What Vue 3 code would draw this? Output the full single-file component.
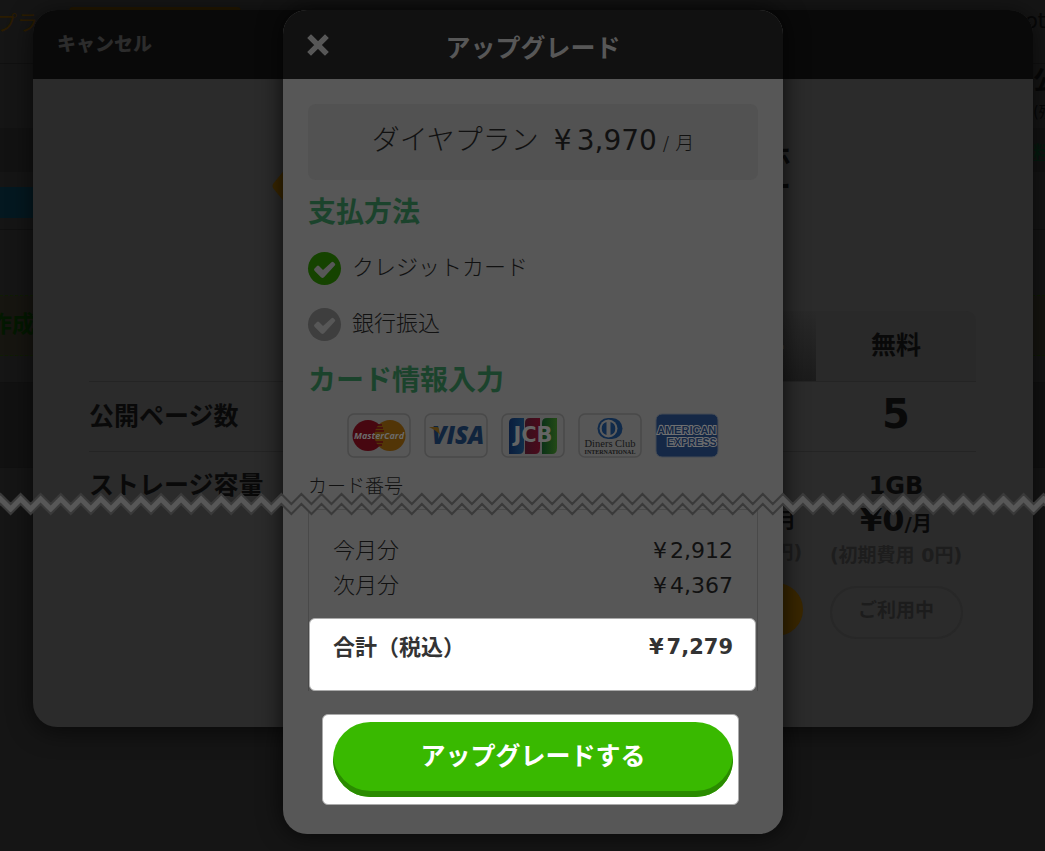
<script setup>
import { ref } from 'vue'

const method = ref('card')
const methods = [
  { id: 'card', label: 'クレジットカード' },
  { id: 'bank', label: '銀行振込' },
]
const invoice = [
  { label: '今月分', price: '2,912' },
  { label: '次月分', price: '4,367' },
]

const zigzag = (high, low) =>
  Array.from({ length: 240 }, (_, i) => `${(i * 10.03 - 9.5).toFixed(1)},${i % 2 ? high : low}`)
const upper = zigzag(2, 12)
const lower = zigzag(12, 22)
const band = [...upper, ...[...lower].reverse()].join(' ')
</script>

<template>
  <div class="page">
    <div class="backdrop" aria-hidden="true">
      <div class="strip top"><span class="plan-word">プラン</span><span class="bar"></span><span class="right thin">ot</span></div>
      <div class="strip publish"><span class="right big">公</span></div>
      <div class="strip rest"><span class="right small">(残</span><span class="right green">料</span></div>
      <div class="strip blue-row"><span class="blue"></span></div>
      <div class="strip gap-row"></div>
      <div class="strip create">作成</div>
      <div class="strip after"></div>
      <div class="strip dark"></div>
      <div class="strip last"></div>
    </div>

    <section class="plans">
      <header class="plans-head"><button class="cancel" type="button">キャンセル</button></header>
      <div class="hero">
        <svg class="gem" width="32" height="40" viewBox="0 0 32 40"><path d="M14 2q2-2 4 0l13 16q1 2 0 4L18 38q-2 2-4 0L1 22q-1-2 0-4z" fill="#3a2700" /></svg>
        <p class="hero-text">ホ<br>ー</p>
      </div>
      <table class="compare">
        <colgroup><col><col class="plan-col"><col class="plan-col"></colgroup>
        <thead>
          <tr><td></td><th class="silver" scope="col">シルバー</th><th class="free" scope="col">無料</th></tr>
        </thead>
        <tbody>
          <tr><th scope="row">公開ページ数</th><td></td><td class="count">5</td></tr>
          <tr class="storage"><th scope="row">ストレージ容量</th><td></td><td class="size">1GB</td></tr>
        </tbody>
        <tfoot>
          <tr>
            <td></td>
            <td><p class="price"><small>/月</small></p><p class="fee">(初期費用 0円)</p><button class="choose" type="button" aria-label="選択"></button></td>
            <td><p class="price">¥0<small>/月</small></p><p class="fee">(初期費用 0円)</p><button class="current" type="button">ご利用中</button></td>
          </tr>
        </tfoot>
      </table>
    </section>

    <section class="dialog" role="dialog" aria-labelledby="dialog-title">
      <header class="dialog-head">
        <button class="close" type="button" aria-label="閉じる">
          <svg width="22" height="22" viewBox="0 0 22 22"><path d="M4 4 18 18M18 4 4 18" stroke="#575757" stroke-width="5.400" stroke-linecap="square" stroke-linejoin="round" /></svg>
        </button>
        <h1 id="dialog-title">アップグレード</h1>
      </header>
      <div class="dialog-body">
        <p class="plan"><span>ダイヤプラン</span><span class="amount"><i>¥</i>3,970</span><small>/ 月</small></p>

        <h2>支払方法</h2>
        <div class="methods">
          <label v-for="m in methods" :key="m.id" class="method">
            <span class="tick" :class="{ on: method === m.id }">
              <input v-model="method" type="radio" name="method" :value="m.id">
              <svg width="33" height="33" viewBox="0 0 33 33"><path d="M6.500 16.500 9 14q1-1 2 0l4 4 8.500-7.700q1-1 2 0l1.300 1.300q1 1 0 2L16 25.200q-1.500 1.500-3 0l-6.500-6.500q-1-1.100 0-2.200z" fill="#575757" /></svg>
            </span>
            {{ m.label }}
          </label>
        </div>

        <h2 class="card-heading">カード情報入力</h2>
        <div class="cards">
          <svg viewBox="0 0 64 45" role="img" aria-label="MasterCard">
            <rect x="1" y="1" width="62" height="43" rx="6" fill="#575757" stroke="#494949" stroke-width="1.500" />
            <circle cx="21" cy="22.500" r="15.500" fill="#470710" /><circle cx="43" cy="22.500" r="15.500" fill="#523507" />
            <path d="M29 12h6M28 15h8M27 18h10M27 29h9M28 32h7" stroke="#470710" stroke-width="1.300" />
            <text x="32" y="26" text-anchor="middle" font-family="Open Sans" font-size="9" font-weight="700" font-style="italic" fill="#6b6b6b">MasterCard</text>
          </svg>
          <svg viewBox="0 0 64 45" role="img" aria-label="VISA">
            <rect x="1" y="1" width="62" height="43" rx="6" fill="#575757" stroke="#494949" stroke-width="1.500" />
            <text x="34" y="31" text-anchor="middle" font-family="Open Sans" font-size="24" font-weight="800" font-style="italic" fill="#10243d">VISA</text>
            <path d="M5 14h8q2 0 2 3l1 5Q12 17 5 14z" fill="#4f390f" />
          </svg>
          <svg viewBox="0 0 64 45" role="img" aria-label="JCB">
            <rect x="1" y="1" width="62" height="43" rx="6" fill="#575757" stroke="#494949" stroke-width="1.500" />
            <defs>
              <linearGradient id="jb"><stop offset="0" stop-color="#0a1d3d" /><stop offset="1" stop-color="#102f4b" /></linearGradient>
              <linearGradient id="jr"><stop offset="0" stop-color="#35101d" /><stop offset="1" stop-color="#4b0a1b" /></linearGradient>
              <linearGradient id="jg"><stop offset="0" stop-color="#0b3217" /><stop offset="1" stop-color="#234a16" /></linearGradient>
            </defs>
            <path d="M8 10q0-5 5-5h10v30q0 6-5 6H8z" fill="url(#jb)" /><path d="M24 10q0-5 5-5h10v30q0 6-5 6H24z" fill="url(#jr)" /><path d="M41 10q0-5 5-5h10v30q0 6-5 6H41z" fill="url(#jg)" />
            <text x="32" y="29" text-anchor="middle" font-family="DejaVu Sans" font-size="21" font-weight="700" fill="#646464">JCB</text>
          </svg>
          <svg viewBox="0 0 64 45" role="img" aria-label="Diners Club International">
            <rect x="1" y="1" width="62" height="43" rx="6" fill="#575757" stroke="#494949" stroke-width="1.500" />
            <path d="M30 5h4a10.500 10.500 0 0 1 0 21h-4a10.500 10.500 0 0 1 0-21z" fill="#102a4a" />
            <circle cx="30.500" cy="15.500" r="9" fill="#5c5c5c" />
            <path d="M28.500 9v13a6.800 6.800 0 0 1 0-13zM32.500 9v13a6.800 6.800 0 0 0 0-13z" fill="#102a4a" />
            <text x="32" y="34" text-anchor="middle" font-family="Liberation Serif" font-size="10.500" fill="#151515">Diners Club</text>
            <text x="32" y="40.500" text-anchor="middle" font-family="Liberation Serif" font-size="6" font-weight="700" fill="#151515">INTERNATIONAL</text>
          </svg>
          <svg viewBox="0 0 64 45" role="img" aria-label="American Express">
            <rect x="1" y="1" width="62" height="43" rx="6" fill="#152846" stroke="#444b55" />
            <g font-family="Liberation Sans" font-size="11" font-weight="700" fill="#152846" stroke="#707070" stroke-width="2" paint-order="stroke">
              <text x="2" y="21">AMERICAN</text><text x="12" y="33" font-size="10.500">EXPRESS</text>
            </g>
          </svg>
        </div>
        <p class="number">カード番号</p>

        <div class="invoice">
          <dl>
            <div v-for="line in invoice" :key="line.label"><dt>{{ line.label }}</dt><dd><i>¥</i>{{ line.price }}</dd></div>
            <div class="total"><dt>合計（税込）</dt><dd><i>¥</i>7,279</dd></div>
          </dl>
        </div>
        <div class="action"><button class="submit" type="button">アップグレードする</button></div>
      </div>
    </section>

    <svg class="tear" height="26" aria-hidden="true">
      <polygon :points="band" fill="#575757" />
      <polyline :points="upper.join(' ')" /><polyline :points="lower.join(' ')" />
    </svg>
  </div>
</template>

<style>
body { background: #151515; }
</style>

<style scoped>
* { box-sizing: border-box; }
p, h1, h2, dl, dd { margin: 0; }
i { font-style: normal; }
button { font: inherit; border: 0; padding: 0; background: none; cursor: pointer; }
.page {
  position: relative;
  display: grid;
  align-items: start;
  min-height: 100vh;
  padding: 10px 12px 17px 33px;
  overflow: hidden;
  color: #111;
  font-family: "DejaVu Sans", "Noto Sans CJK JP", sans-serif;
}
.backdrop { position: absolute; inset: 0; display: grid; grid-template-rows: 64px 64px 44px 58px 66px 60px 27px 85px 1fr; background: #151515; }
.strip { position: relative; border-bottom: 1px solid #101010; }
.plan-word { position: absolute; left: -4px; top: 10px; color: #2b1c00; font-size: 21px; line-height: 26px; }
.bar { position: absolute; left: 69px; top: 7px; width: 172px; height: 20px; border-radius: 4px; background: #221700; }
.right { position: absolute; left: calc(100% - 12px); white-space: nowrap; color: #070707; }
.thin { top: 8px; left: calc(100% - 20px); font-size: 21px; line-height: 26px; }
.big { top: 2px; font-size: 25px; font-weight: 700; line-height: 30px; }
.publish, .rest { border: 0; }
.rest { background: #121212; }
.small { top: -26px; font-size: 15px; line-height: 20px; }
.green { top: 13px; font-size: 18px; font-weight: 700; line-height: 24px; color: #051b0f; text-decoration: underline; }
.blue { position: absolute; left: 0; top: 15px; width: 90px; height: 31px; background: #041820; }
.gap-row { border-bottom: 1px dashed #101d04; }
.create { background: #161510; border-bottom: 1px dashed #101d04; color: #031800; font-size: 23px; font-weight: 700; line-height: 56px; text-indent: -11px; }
.dark { background: #111; }
.last { border: 0; }

.plans, .dialog { grid-area: 1 / 1; overflow: hidden; border-radius: 24px; }
.plans { position: relative; min-height: 717px; background: #2b2b2b; box-shadow: 0 4px 24px #0009; color: #090909; }
.plans-head { height: 69px; background: #090909; }
.cancel { margin: 20px 0 0 24px; color: #2c2c2c; font-size: 19px; font-weight: 900; line-height: 28px; }
.hero { display: flex; justify-content: space-between; height: 232px; padding: 64px 242px 0 239px; }
.gem { margin-top: 23px; }
.hero-text { font-size: 28px; font-weight: 700; line-height: 30px; }
.compare { width: calc(100% - 113px); margin-left: 56px; table-layout: fixed; border-collapse: collapse; font-size: 25px; font-weight: 700; }
.plan-col { width: 160px; }
.compare tr { height: 70px; }
.compare th, .compare td { padding: 0; text-align: center; }
.compare tbody tr { border-top: 1px solid #242424; }
.compare tbody th { padding-bottom: 4px; text-align: left; }
.silver { background: linear-gradient(#292929, #1b1b1b); color: #373737; }
.compare .free { background: #292929; border-radius: 0 10px 0 0; padding-bottom: 6px; }
.compare tbody .count { padding-bottom: 4px; font-size: 40px; line-height: 50px; }
.compare .storage { height: 50px; }
.compare .storage th, .compare .storage td { padding: 18px 0 0; line-height: 32px; }
.compare .storage .size { font-size: 24px; }
.price { height: 32px; font-size: 32px; line-height: 30px; white-space: nowrap; }
.price small { font-size: 20px; }
tfoot td:nth-child(2) .price { text-align: right; padding-right: 20px; }
.fee { margin-top: 5px; color: #1d1d1d; font-size: 19px; line-height: 26px; white-space: nowrap; }
.choose, .current { width: 133px; height: 53px; margin-top: 18px; border-radius: 27px; }
.choose { background: #3a2700; }
.current { border: 2px solid #272727; color: #1c1c1c; font-size: 19px; line-height: 44px; padding-bottom: 4px; }

.dialog { position: relative; justify-self: center; width: 100%; max-width: 500px; background: #575757; box-shadow: 0 0 24px #000b; }
.dialog-head { position: relative; height: 69px; background: #111; color: #575757; text-align: center; }
.close { position: absolute; left: 24px; top: 24px; width: 22px; height: 22px; }
.close svg { display: block; }
h1 { padding-top: 21px; font-size: 25px; line-height: 36px; }
.dialog-body { padding: 25px 25px 29px; }
.plan { display: flex; justify-content: center; align-items: baseline; height: 76px; border-radius: 8px; background: #525252; font-size: 28px; font-weight: 300; line-height: 74px; }
.amount { margin-left: 15px; font-weight: 400; }
.amount i { margin-right: 5px; }
.plan small { margin-left: 6px; font-size: 19px; }
h2 { margin-top: 18px; color: #1b432c; font-size: 28px; line-height: 30px; }
.methods { display: grid; gap: 23px; margin-top: 24px; }
.method { display: flex; gap: 11px; height: 33px; font-size: 22px; font-weight: 300; line-height: 31px; }
.tick { position: relative; width: 33px; height: 33px; border-radius: 50%; background: #3e3e3e; }
.tick.on { background: #154300; }
.tick input { position: absolute; inset: 0; width: 100%; height: 100%; margin: 0; appearance: none; }
.tick svg { display: block; }
.card-heading { margin-top: 25px; }
.cards { display: flex; justify-content: center; gap: 13px; margin: 17px 1px 0 0; }
.cards svg { width: 64px; height: 45px; }
.number { margin-top: 18px; font-size: 19px; font-weight: 300; line-height: 20px; }
.invoice { margin-top: 13px; border: 1px solid #494949; border-bottom: 0; font-size: 22px; font-weight: 300; }
dl { padding-top: 23px; }
dl div { display: flex; justify-content: space-between; padding: 0 24px; line-height: 35px; }
dd { font-weight: 400; }
dd i { margin-right: 3px; }
dl .total { height: 73px; margin: 15px 1px 0 0; padding: 11px 22px 0 23px; border: 1px solid #aaa; border-radius: 6px; background: #fff; color: #333; font-weight: 700; }
.total dd { font-size: 21px; font-weight: 700; }
.action { margin: 23px 19px 0 14px; padding: 7px 5px 7px 10px; border: 1px solid #aaa; border-radius: 6px; background: #fff; }
.submit { display: block; width: 100%; height: 75px; padding-bottom: 6px; border-radius: 38px; background: #39b900; box-shadow: inset 0 -6px #2a8b00; color: #fff; font-size: 25px; font-weight: 700; line-height: 36px; }
.tear { position: absolute; left: 0; top: 492px; width: 100%; overflow: hidden; }
.tear polyline { fill: none; stroke: #3a3a3a; stroke-width: 2; }
</style>
